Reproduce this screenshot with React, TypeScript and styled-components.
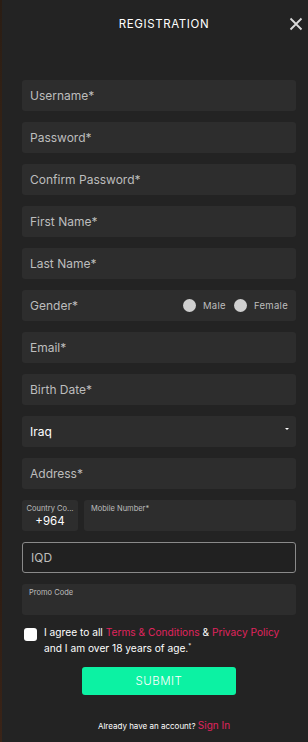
import React from 'react';
import styled, {createGlobalStyle} from 'styled-components';

const GlobalStyle = createGlobalStyle`
    html, body {
        margin: 0;
        padding: 0;
        background: #1a1510;
    }
    * {
        box-sizing: border-box;
    }
`;

const Page = styled.div`
    display: flex;
    width: 308px;
    height: 742px;
    font-family: Inter, "Noto Sans", sans-serif;
`;

const Backdrop = styled.div`
    width: 2px;
    background: linear-gradient(180deg, #2a1d14 0%, #3b2516 30%, #24170f 60%, #3a2418 100%);
`;

const Panel = styled.div`
    flex: 1;
    background: #232323;
    display: flex;
    flex-direction: column;
    padding: 0 12px 0 20px;
`;

const Header = styled.div`
    position: relative;
    height: 80px;
    display: flex;
    justify-content: center;
    padding-top: 17px;
`;

const Title = styled.div`
    color: #fff;
    font-size: 11.5px;
    letter-spacing: 0.6px;
    margin-left: 10px;
`;

const CloseButton = styled.button`
    position: absolute;
    right: -7px;
    top: 17px;
    width: 14px;
    height: 14px;
    padding: 0;
    border: none;
    background: none;
    cursor: pointer;
    display: flex;
    align-items: center;
    justify-content: center;
`;

const Fields = styled.div`
    display: flex;
    flex-direction: column;
    gap: 11px;
`;

const Field = styled.div<{$bordered?: boolean}>`
    height: 31px;
    border-radius: 3px;
    background: ${({$bordered}) => ($bordered ? '#212121' : '#2d2d2d')};
    border: ${({$bordered}) => ($bordered ? '1px solid #8a8a8a' : 'none')};
    display: flex;
    align-items: center;
    padding: 0 8px;
    color: #bdbdbd;
    font-size: 12px;
`;

const Value = styled.span`
    color: #fff;
`;

const Radios = styled.div`
    margin-left: auto;
    display: flex;
    align-items: center;
    gap: 7px;
    font-size: 9.5px;
    letter-spacing: 0.3px;
    color: #bdbdbd;
`;

const RadioDot = styled.span`
    width: 13px;
    height: 13px;
    border-radius: 50%;
    background: #cfcfcf;
    margin-left: 1px;
`;

const Caret = styled.span`
    margin-left: auto;
    width: 0;
    height: 0;
    border-left: 2px solid transparent;
    border-right: 2px solid transparent;
    border-top: 2px solid #fff;
    margin-top: -6px;
    margin-right: -1px;
`;

const PhoneRow = styled.div`
    display: grid;
    grid-template-columns: 56px 1fr;
    gap: 6px;
`;

const SmallBox = styled.div<{$center?: boolean}>`
    height: 31px;
    border-radius: 3px;
    background: #2d2d2d;
    display: flex;
    flex-direction: column;
    align-items: ${({$center}) => ($center ? 'center' : 'flex-start')};
    padding: 4px ${({$center}) => ($center ? '2px' : '7px')};
    color: #bdbdbd;
    font-size: 7.5px;
    overflow: hidden;
`;

const Code = styled.span`
    color: #fff;
    font-size: 11.5px;
    margin-top: 1px;
`;

const Agree = styled.div`
    display: flex;
    gap: 7px;
    margin-top: 11px;
    padding-left: 2px;
    font-size: 10.2px;
    line-height: 13px;
    color: #fff;
`;

const Checkbox = styled.span`
    flex: none;
    width: 13px;
    height: 13px;
    border-radius: 3px;
    background: #fff;
    margin-top: 2px;
`;

const Link = styled.a`
    color: #e0245e;
    text-decoration: none;
`;

const Sup = styled.sup`
    font-size: 6px;
`;

const Submit = styled.button`
    align-self: center;
    margin-top: 12px;
    width: 154px;
    height: 28px;
    border: none;
    border-radius: 3px;
    background: #0cf2a3;
    color: #fff;
    font-family: inherit;
    font-size: 11.5px;
    font-weight: 300;
    letter-spacing: 0.5px;
    cursor: pointer;
`;

const SignIn = styled.div`
    margin-top: 24px;
    text-align: center;
    font-size: 8px;
    color: #fff;
    padding-left: 10px;

    a {
        font-size: 10px;
    }
`;

const Close = () => (
    <svg width="14" height="14" viewBox="0 0 14 14">
        <path d="M1.5 1.5 L12.5 12.5 M12.5 1.5 L1.5 12.5" stroke="#d8d8d8" strokeWidth="1.8"/>
    </svg>
);

export default function App() {
    const plain = ['Username*', 'Password*', 'Confirm Password*', 'First Name*', 'Last Name*'];

    return (
        <>
            <GlobalStyle/>
            <Page>
                <Backdrop/>
                <Panel>
                    <Header>
                        <Title>REGISTRATION</Title>
                        <CloseButton aria-label="Close"><Close/></CloseButton>
                    </Header>
                    <Fields>
                        {plain.map(label => <Field key={label}>{label}</Field>)}
                        <Field>
                            Gender*
                            <Radios>
                                <RadioDot/>Male
                                <RadioDot/>Female
                            </Radios>
                        </Field>
                        <Field>Email*</Field>
                        <Field>Birth Date*</Field>
                        <Field><Value>Iraq</Value><Caret/></Field>
                        <Field>Address*</Field>
                        <PhoneRow>
                            <SmallBox $center>
                                Country Co...
                                <Code>+964</Code>
                            </SmallBox>
                            <SmallBox>Mobile Number*</SmallBox>
                        </PhoneRow>
                        <Field $bordered>IQD</Field>
                        <SmallBox>Promo Code</SmallBox>
                    </Fields>
                    <Agree>
                        <Checkbox/>
                        <div>
                            I agree to all <Link>Terms &amp; Conditions</Link> &amp; <Link>Privacy Policy</Link>
                            <br/>and I am over 18 years of age.<Sup>*</Sup>
                        </div>
                    </Agree>
                    <Submit>SUBMIT</Submit>
                    <SignIn>Already have an account? <Link>Sign In</Link></SignIn>
                </Panel>
            </Page>
        </>
    );
}
